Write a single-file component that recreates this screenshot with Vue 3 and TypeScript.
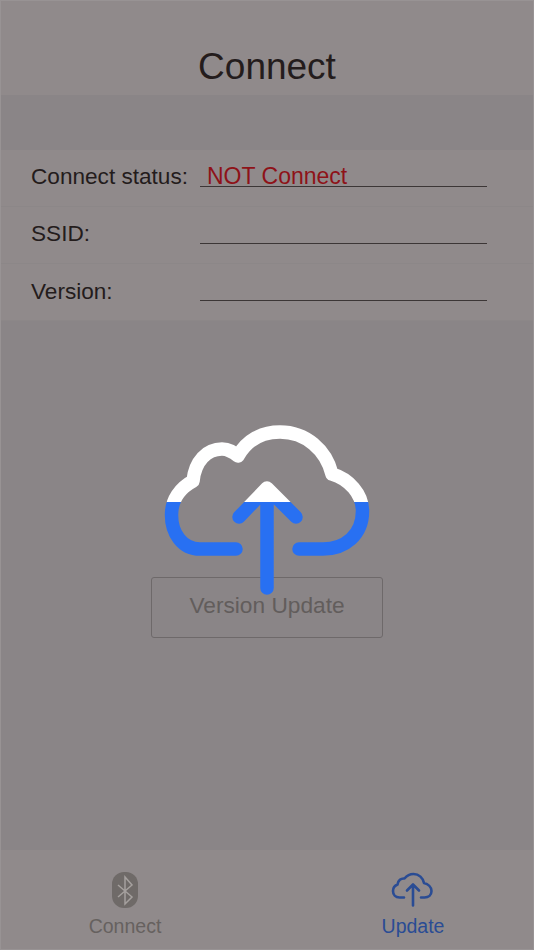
<script setup lang="ts">
const rows = [
  { label: 'Connect status:', value: 'NOT Connect' },
  { label: 'SSID:', value: '' },
  { label: 'Version:', value: '' },
]
</script>

<template>
  <div class="page">
    <header class="head">Connect</header>
    <div class="spacer"></div>
    <section class="rows">
      <div v-for="r in rows" :key="r.label" class="row">
        <span class="label">{{ r.label }}</span>
        <span class="value">{{ r.value }}</span>
      </div>
    </section>
    <main class="body">
      <button class="btn">Version Update</button>
    </main>
    <nav class="tabs">
      <div class="tab">
        <svg class="ico" width="40" height="38" viewBox="0 0 40 38">
          <rect x="7" y="0" width="26" height="36" rx="12" fill="#6f6a68" />
          <path d="M13 13 L27 25 L20 32 V5 L27 13 L13 25" fill="none" stroke="#a5a09e" stroke-width="1.5" />
        </svg>
        <span class="tab-text">Connect</span>
      </div>
      <div class="tab active">
        <svg class="ico" width="46" height="38" viewBox="0 0 46 38">
          <path d="M14 25.500 H9.500 C5.500 25.500 3 22.500 3 19 C3 16 5 13.500 7.500 12.500 C8 8.500 11 6 14.500 6.500 C17 3.500 20 2 23.500 2 C29 2 33 6 34 11 C38 12 41.500 15 41.500 19 C41.500 23 38.500 25.500 34.500 25.500 H31" fill="none" stroke="#2a4c94" stroke-width="2.600" stroke-linecap="round" stroke-linejoin="round" />
          <path d="M23 33.500 V12.500 M17 18.500 L23 12.500 L29 18.500" fill="none" stroke="#2a4c94" stroke-width="2.600" stroke-linecap="round" stroke-linejoin="round" />
        </svg>
        <span class="tab-text">Update</span>
      </div>
    </nav>
    <svg class="cloud" width="534" height="950" viewBox="0 0 534 950">
      <defs>
        <linearGradient id="split" gradientUnits="userSpaceOnUse" x1="0" y1="400" x2="0" y2="600">
          <stop offset="0.51" stop-color="#ffffff" />
          <stop offset="0.51" stop-color="#2870f2" />
        </linearGradient>
      </defs>
      <path d="M236 549 H200 C182 549 171.500 533 171.500 515 C171.500 500 180 488 193 481 C195 461 207 449 222 449 C229 449 233 452 238 456 C247 440 262 432 280 432 C306 432 326 450 332 474 C349 479 362.500 494 362.500 511 C362.500 535 345 549 323 549 H299" fill="none" stroke="url(#split)" stroke-width="13.500" stroke-linecap="round" stroke-linejoin="round" />
      <path d="M267 588 V489 M239 517 L267 488 L296 517" fill="none" stroke="url(#split)" stroke-width="13.500" stroke-linecap="round" stroke-linejoin="round" />
    </svg>
    <div class="edge"></div>
  </div>
</template>

<style>
html, body { margin: 0; padding: 0; background: #908a8b; }
</style>

<style scoped>
.page {
  position: relative;
  width: 534px;
  height: 950px;
  box-sizing: border-box;
  display: flex;
  flex-direction: column;
  background: #8a8587;
  font-family: "Liberation Sans", Arial, sans-serif;
  color: #241c1c;
  overflow: hidden;
}
.head {
  height: 95px;
  flex: none;
  box-sizing: border-box;
  padding-top: 43px;
  background: #908a8b;
  text-align: center;
  font-size: 37px;
  line-height: 48px;
}
.spacer { height: 55px; flex: none; }
.rows { display: flex; flex-direction: column; flex: none; }
.row {
  height: 57px;
  box-sizing: border-box;
  background: #908a8b;
  border-bottom: 1px solid #8c8788;
  display: flex;
  align-items: flex-start;
  padding: 12px 47px 0 31px;
  font-size: 22.600px;
  line-height: 28px;
}
.label { width: 169px; flex: none; padding-top: 1px; }
.row:last-child .label { padding-top: 2px; }
.value {
  flex: 1;
  height: 24px;
  line-height: 28px;
  padding-left: 7px;
  font-size: 23px;
  border-bottom: 1px solid #3c3636;
  color: #8e1218;
}
.body {
  flex: 1;
  display: flex;
  justify-content: center;
  align-items: flex-start;
  padding-top: 256px;
}
.btn {
  width: 232px;
  height: 61px;
  background: transparent;
  border: 1px solid #6e696a;
  border-radius: 3px;
  color: #625d5c;
  font-family: inherit;
  font-size: 22.700px;
  padding: 0 0 4px;
}
.tabs {
  height: 100px;
  flex: none;
  background: #908a8b;
  display: grid;
  grid-template-columns: 250px 242px;
  column-gap: 42px;
}
.tab {
  display: flex;
  flex-direction: column;
  align-items: center;
  padding-top: 22px;
  color: #66615f;
}
.tab.active { color: #2a4c94; }
.ico { display: block; flex: none; }
.tab-text { font-size: 19.500px; line-height: 24px; margin-top: 4px; }
.cloud { position: absolute; left: 0; top: 0; pointer-events: none; }
.edge {
  position: absolute;
  inset: 0;
  border: 1px solid #989394;
  pointer-events: none;
}
</style>
